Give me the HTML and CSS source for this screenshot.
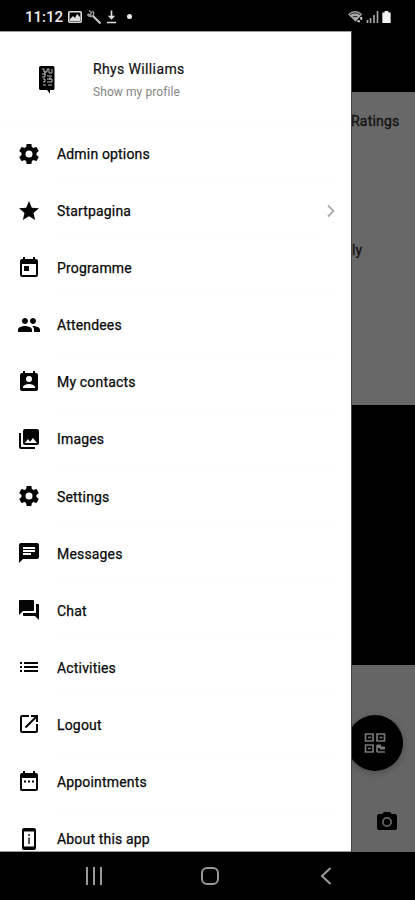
FILE: index.html
```html
<!DOCTYPE html>
<html lang="en">
<head>
<meta charset="utf-8">
<title>Menu</title>
<link rel="stylesheet" href="styles.css">
</head>
<body>
<div class="phone">
  <header class="status">
    <span class="time">11:12</span>
    <svg class="s-image" viewBox="0 0 14 12"><rect x=".8" y=".8" width="12.4" height="10.4" rx="1" fill="none" stroke="#ddd" stroke-width="1.6"/><path d="M2 10V8l3-3 2 2 2-4 3 3v4z" fill="#ddd"/></svg>
    <svg class="s-key" viewBox="0 0 16 16"><path d="M3 1.500l2.500 2-1 2.500-3-1M1.500 5.500q2 3 5 1.500Q9 4.500 6.500 2" fill="none" stroke="#999" stroke-width="1.400"/><path d="M7 7l7.500 7.500" fill="none" stroke="#ccc" stroke-width="2"/></svg>
    <svg class="s-down" viewBox="0 0 12 14"><path d="M6 0v7M1 13h10" fill="none" stroke="#ddd" stroke-width="1.800"/><path d="M2 5.500h8L6 10z" fill="#ddd"/></svg>
    <i class="dot"></i>
    <span class="spacer"></span>
    <svg class="s-wifi" viewBox="0 0 18 13"><path d="M0 4Q7.500-2.500 15 4L8 12z" fill="#aaa"/><path d="M2 4.500q5.500-3.500 11 0M5 7q2.500-1.500 5 0" fill="none" stroke="#111" stroke-width="1"/><path d="M10 11.500h2.500M14 7v3" fill="none" stroke="#ddd" stroke-width="2"/></svg>
    <svg class="s-signal" viewBox="0 0 12 13"><path d="M1 13v-3M4 13V8M7.500 13V5M11 13V1" fill="none" stroke="#aaa" stroke-width="1.6"/></svg>
    <svg class="s-battery" viewBox="0 0 9 13"><path d="M2.500 0h4v1.500H9V13H0V1.500h2.500z" fill="#f4f4f4"/></svg>
  </header>

  <main class="content">
    <aside class="drawer">
      <div class="profile">
        <svg class="avatar" viewBox="0 0 18 28"><path d="M2.500 0h12.500q1.500 0 1.500 1.500v21q0 1.500-1.500 1.500h-3v3.500L9 24H2.500Q1 24 1 22.500v-21Q1 0 2.500 0z"/><path d="M4 3h2v3h3V3h2v4h3V3M4 8h3v3H4m5-1h5M5 13h2v3H5m4-3h5v3H9m-4 3h3m2 0h4M7 5v4m5 2v3" fill="none" stroke="#bbb" stroke-width="1"/></svg>
        <div class="who">
          <div class="name">Rhys Williams</div>
          <div class="sub">Show my profile</div>
        </div>
      </div>
      <nav class="menu">
        <a class="item"><svg class="icon" viewBox="0 0 24 24"><path id="gear" d="M19.430 12.980c.04-.32.07-.64.07-.98s-.03-.66-.07-.98l2.110-1.650c.19-.15.24-.42.12-.64l-2-3.460c-.12-.22-.39-.3-.61-.22l-2.490 1c-.52-.4-1.080-.73-1.690-.98l-.38-2.650C14.460 2.180 14.250 2 14 2h-4c-.25 0-.46.18-.49.42l-.38 2.650c-.61.25-1.170.59-1.690.98l-2.490-1c-.23-.09-.49 0-.61.22l-2 3.460c-.13.22-.07.49.12.64l2.110 1.650c-.04.32-.07.65-.07.98s.03.66.07.98l-2.110 1.650c-.19.15-.24.42-.12.64l2 3.460c.12.22.39.3.61.22l2.490-1c.52.4 1.080.73 1.690.98l.38 2.650c.03.24.24.42.49.42h4c.25 0 .46-.18.49-.42l.38-2.650c.61-.25 1.170-.59 1.690-.98l2.490 1c.23.09.49 0 .61-.22l2-3.460c.12-.22.07-.49-.12-.64zM12 15.500a3.500 3.500 0 1 1 0-7 3.500 3.500 0 0 1 0 7z"/></svg><span>Admin options</span></a>
        <a class="item"><svg class="icon" viewBox="0 0 24 24"><path d="M12 17.270L18.180 21l-1.640-7.030L22 9.240l-7.190-.61L12 2 9.190 8.630 2 9.240l5.460 4.730L5.820 21z"/></svg><span>Startpagina</span><svg class="chevron" viewBox="0 0 8 14"><path d="M1 1.500L6.500 7 1 12.500"/></svg></a>
        <a class="item"><svg class="icon" viewBox="0 0 24 24"><path d="M19 3h-1V1h-2v2H8V1H6v2H5a2 2 0 0 0-2 2v14a2 2 0 0 0 2 2h14a2 2 0 0 0 2-2V5a2 2 0 0 0-2-2zm0 16H5V8h14zM7 10h5v5H7z"/></svg><span>Programme</span></a>
        <a class="item"><svg class="icon" viewBox="0 0 24 24"><path d="M16 11c1.660 0 2.990-1.340 2.990-3S17.660 5 16 5s-3 1.340-3 3 1.340 3 3 3zm-8 0c1.660 0 2.990-1.340 2.990-3S9.660 5 8 5 5 6.340 5 8s1.340 3 3 3zm0 2c-2.330 0-7 1.170-7 3.500V19h14v-2.500c0-2.330-4.670-3.500-7-3.500zm8 0c-.29 0-.62.02-.97.05 1.160.84 1.970 1.970 1.970 3.450V19h6v-2.500c0-2.330-4.670-3.500-7-3.500z"/></svg><span>Attendees</span></a>
        <a class="item"><svg class="icon" viewBox="0 0 24 24"><path d="M19 3h-1V1h-2v2H8V1H6v2H5a2 2 0 0 0-2 2v14a2 2 0 0 0 2 2h14a2 2 0 0 0 2-2V5a2 2 0 0 0-2-2zm-7 3a3 3 0 1 1 0 6 3 3 0 0 1 0-6zm6 12H6v-1c0-2 4-3.100 6-3.100s6 1.100 6 3.100z"/></svg><span>My contacts</span></a>
        <a class="item"><svg class="icon" viewBox="0 0 24 24"><path d="M22 16V4a2 2 0 0 0-2-2H8a2 2 0 0 0-2 2v12a2 2 0 0 0 2 2h12a2 2 0 0 0 2-2zm-11-4l2.030 2.710L16 11l4 5H8zM2 6v14a2 2 0 0 0 2 2h14v-2H4V6z"/></svg><span>Images</span></a>
        <a class="item"><svg class="icon" viewBox="0 0 24 24"><use href="#gear"/></svg><span>Settings</span></a>
        <a class="item"><svg class="icon" viewBox="0 0 24 24"><path d="M20 2H4a2 2 0 0 0-1.990 2L2 22l4-4h14a2 2 0 0 0 2-2V4a2 2 0 0 0-2-2zM6 9h12v2H6zm8 5H6v-2h8zm4-6H6V6h12z"/></svg><span>Messages</span></a>
        <a class="item"><svg class="icon" viewBox="0 0 24 24"><path d="M21 6h-2v9H6v2c0 .55.45 1 1 1h11l4 4V7c0-.55-.45-1-1-1zm-4 6V3c0-.55-.45-1-1-1H3c-.55 0-1 .45-1 1v14l4-4h10c.55 0 1-.45 1-1z"/></svg><span>Chat</span></a>
        <a class="item"><svg class="icon" viewBox="0 0 24 24"><path d="M3 13h2v-2H3zm0 4h2v-2H3zm0-8h2V7H3zm4 4h14v-2H7zm0 4h14v-2H7zM7 7v2h14V7z"/></svg><span>Activities</span></a>
        <a class="item"><svg class="icon" viewBox="0 0 24 24"><path d="M19 19H5V5h7V3H5a2 2 0 0 0-2 2v14a2 2 0 0 0 2 2h14c1.100 0 2-.9 2-2v-7h-2zM14 3v2h3.590l-9.830 9.830 1.410 1.410L19 6.410V10h2V3z"/></svg><span>Logout</span></a>
        <a class="item"><svg class="icon" viewBox="0 0 24 24"><path d="M19 3h-1V1h-2v2H8V1H6v2H5a2 2 0 0 0-2 2v14a2 2 0 0 0 2 2h14a2 2 0 0 0 2-2V5a2 2 0 0 0-2-2zm0 16H5V8h14zM7 10.500h2v2H7zm4 0h2v2h-2zm4 0h2v2h-2z"/></svg><span>Appointments</span></a>
        <a class="item"><svg class="icon" viewBox="0 0 24 24"><path d="M17 1H7a2 2 0 0 0-2 2v18a2 2 0 0 0 2 2h10a2 2 0 0 0 2-2V3a2 2 0 0 0-2-2zm0 18.500H7v-15h10z"/><path d="M11 7h2v2h-2zm0 3.500h2V17h-2z" fill="#555"/></svg><span>About this app</span></a>
      </nav>
    </aside>

    <section class="page">
      <div class="page-top"></div>
      <div class="panel">
        <div class="ratings">Ratings</div>
        <div class="clip">ly</div>
      </div>
      <div class="banner"></div>
      <div class="actions">
        <div class="fab"><svg viewBox="0 0 22 20"><path d="M1.500 1h7.500v7H1.500zM13 1h7.500v7H13zM1.500 12h7.500v7H1.500zM4 4.500h3M15.500 4.500h3M4 15.500h3M13 19v-7M13 19h8" fill="none" stroke="#777" stroke-width="1.700"/><path d="M13 11.500h4v2h4v3h-5v-1.500h-3z" fill="#777"/></svg></div>
        <svg class="camera" viewBox="0 0 20 18"><path d="M7 0L5.200 2H2a2 2 0 0 0-2 2v12a2 2 0 0 0 2 2h16a2 2 0 0 0 2-2V4a2 2 0 0 0-2-2h-3.200L13 0z"/><circle cx="10" cy="10" r="4.100" fill="none" stroke="#666" stroke-width="1.800"/></svg>
      </div>
    </section>
  </main>

  <footer class="navbar">
    <svg viewBox="0 0 18 18"><path d="M2 0v18M9 0v18M16 0v18"/></svg>
    <svg viewBox="0 0 18 18"><rect x="1" y="1" width="16" height="16" rx="5"/></svg>
    <svg viewBox="0 0 18 18"><path d="M13.500 1L5 9l8.500 8"/></svg>
  </footer>
</div>
</body>
</html>
```
FILE: styles.css
```css
* { box-sizing: border-box; }
body { margin: 0; background: #000; font-family: Roboto, sans-serif; color: #111; }
svg { display: block; flex: none; }
.phone { width: 415px; height: 900px; display: grid; grid-template-rows: 31px 821px 48px; overflow: hidden; background: #000; }

.status { display: flex; align-items: center; padding: 2px 24px 0 25px; color: #eee; }
.time { width: 38px; font-size: 15px; font-weight: 500; letter-spacing: 0; line-height: 18px; white-space: nowrap; }
.s-image { width: 14px; height: 12px; margin-left: 5px; }
.s-key { width: 16px; height: 16px; margin-left: 4px; }
.s-down { width: 11px; height: 14px; margin-left: 4px; }
.dot { width: 5px; height: 5px; border-radius: 50%; background: #eee; margin-left: 10px; }
.spacer { flex: 1; }
.s-wifi { width: 17px; height: 13px; }
.s-signal { width: 13px; height: 13px; margin: 0 3px 0 1px; }
.s-battery { width: 9px; height: 12px; }

.content { display: grid; grid-template-columns: 351px 64px; overflow: hidden; }
.drawer { background: #fff; overflow: hidden; border-top: 1px solid #999; border-bottom: 1px solid #999; }
.profile { height: 93px; display: flex; align-items: center; padding: 3px 0 0 38px; border-bottom: 1px solid #fcfcfc; }
.avatar { width: 18px; height: 28px; }
.who { margin-left: 37px; }
.name { font-size: 14px; line-height: 20px; letter-spacing: .37px; -webkit-text-stroke: .2px #111; }
.sub { margin-top: 4px; font-size: 12px; line-height: 18px; letter-spacing: .08px; color: #858585; }
.item { height: 57.1px; display: flex; align-items: center; padding-left: 17px; font-size: 14px; letter-spacing: .17px; color: #080808; -webkit-text-stroke: .25px #080808; }
.item span { flex: 1; margin-left: 16px; height: 57.1px; line-height: 58px; border-bottom: 1px solid #fcfcfc; margin-right: 16px; }
.icon { width: 24px; height: 24px; fill: #050505; }
.chevron { width: 8px; height: 14px; margin: 0 16px 0 -8px; fill: none; stroke: #aaa; stroke-width: 1.8; }

.page { display: grid; grid-template-rows: 61px 313px 260px 187px; overflow: hidden; border-left: 1px solid #444; }
.panel { background: #686868; font-size: 14px; letter-spacing: .2px; -webkit-text-stroke: .3px #111; overflow: hidden; white-space: nowrap; }
.ratings { margin-top: 19px; line-height: 20px; margin-left: -1px; }
.clip { margin-top: 109px; line-height: 20px; }
.actions { background: #656565; overflow: hidden; }
.fab { width: 56px; height: 56px; margin: 50px 0 0 -5px; border-radius: 50%; background: #000; display: flex; align-items: center; justify-content: center; box-shadow: 0 2px 6px rgba(0, 0, 0, .25); }
.fab svg { width: 22px; height: 20px; }
.camera { width: 20px; height: 18px; margin: 41px 0 0 25px; }

.navbar { display: flex; align-items: center; padding-left: 85px; gap: 98px; }
.navbar svg { width: 18px; height: 18px; fill: none; stroke: #999; stroke-width: 2; }
```
